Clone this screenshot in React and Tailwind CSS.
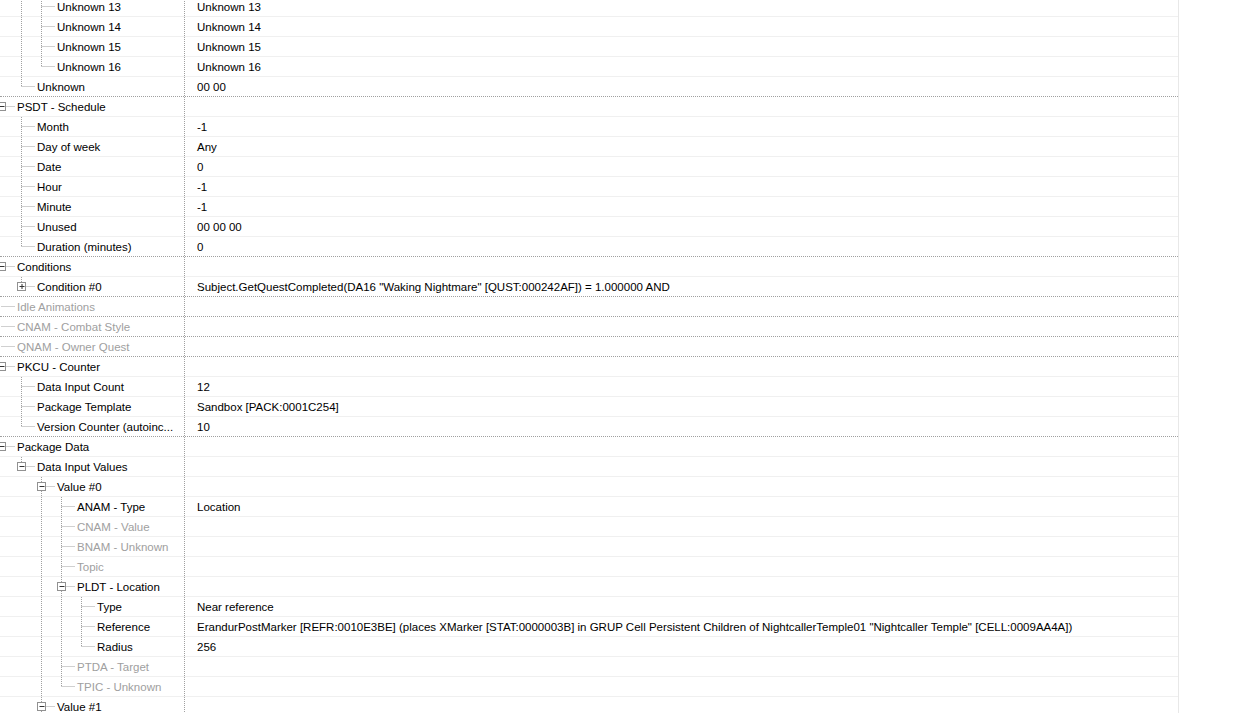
const rows = [
  { name: 'Unknown 13', value: 'Unknown 13', level: 3 },
  { name: 'Unknown 14', value: 'Unknown 14', level: 3 },
  { name: 'Unknown 15', value: 'Unknown 15', level: 3 },
  { name: 'Unknown 16', value: 'Unknown 16', level: 3, last: true },
  { name: 'Unknown', value: '00 00', level: 2, last: true, sep: true },
  { name: 'PSDT - Schedule', level: 1, box: '-' },
  { name: 'Month', value: '-1', level: 2 },
  { name: 'Day of week', value: 'Any', level: 2 },
  { name: 'Date', value: '0', level: 2 },
  { name: 'Hour', value: '-1', level: 2 },
  { name: 'Minute', value: '-1', level: 2 },
  { name: 'Unused', value: '00 00 00', level: 2 },
  { name: 'Duration (minutes)', value: '0', level: 2, last: true, sep: true },
  { name: 'Conditions', level: 1, box: '-' },
  {
    name: 'Condition #0',
    value: 'Subject.GetQuestCompleted(DA16 "Waking Nightmare" [QUST:000242AF]) = 1.000000 AND',
    level: 2,
    box: '+',
    last: true,
    sep: true,
  },
  { name: 'Idle Animations', level: 1, grey: true, sep: true },
  { name: 'CNAM - Combat Style', level: 1, grey: true, sep: true },
  { name: 'QNAM - Owner Quest', level: 1, grey: true, sep: true },
  { name: 'PKCU - Counter', level: 1, box: '-' },
  { name: 'Data Input Count', value: '12', level: 2 },
  { name: 'Package Template', value: 'Sandbox [PACK:0001C254]', level: 2 },
  { name: 'Version Counter (autoinc...', value: '10', level: 2, last: true, sep: true },
  { name: 'Package Data', level: 1, box: '-' },
  { name: 'Data Input Values', level: 2, box: '-', last: true },
  { name: 'Value #0', level: 3, box: '-' },
  { name: 'ANAM - Type', value: 'Location', level: 4 },
  { name: 'CNAM - Value', level: 4, grey: true },
  { name: 'BNAM - Unknown', level: 4, grey: true },
  { name: 'Topic', level: 4, grey: true },
  { name: 'PLDT - Location', level: 4, box: '-' },
  { name: 'Type', value: 'Near reference', level: 5 },
  {
    name: 'Reference',
    value:
      'ErandurPostMarker [REFR:0010E3BE] (places XMarker [STAT:0000003B] in GRUP Cell Persistent Children of NightcallerTemple01 "Nightcaller Temple" [CELL:0009AA4A])',
    level: 5,
  },
  { name: 'Radius', value: '256', level: 5, last: true },
  { name: 'PTDA - Target', level: 4, grey: true },
  { name: 'TPIC - Unknown', level: 4, grey: true, last: true },
  { name: 'Value #1', level: 3, box: '-' },
];

// ancestors above the first visible row are still open (not last)
function withGuides(list) {
  const open = { 1: true, 2: true };
  return list.map((r) => {
    const guides = [];
    for (let a = 2; a < r.level; a++) if (open[a]) guides.push(a);
    open[r.level] = !r.last;
    return { ...r, guides };
  });
}

const dot = { stroke: '#a0a0a0', strokeWidth: 1, strokeDasharray: '1 1' };

function TreeLines({ row }) {
  const L = row.level;
  const cx = 20 * L - 19 + 0.5;
  return (
    <svg className="absolute left-0 top-0" width="184" height="20">
      {row.guides.map((a) => (
        <line key={a} x1={20 * a - 18.5} y1={0} x2={20 * a - 18.5} y2={20} {...dot} />
      ))}
      {L > 1 && <line x1={cx} y1={0} x2={cx} y2={row.last ? 10 : 20} {...dot} />}
      <line x1={cx} y1={9.5} x2={20 * L - 5} y2={9.5} {...dot} />
      {row.box && (
        <g>
          <rect x={cx - 4} y={5.5} width={8} height={8} fill="#fff" stroke="#919191" />
          <line x1={cx - 2} y1={9.5} x2={cx + 3} y2={9.5} stroke="#333" />
          {row.box === '+' && <line x1={cx + 0.5} y1={7} x2={cx + 0.5} y2={12} stroke="#333" />}
        </g>
      )}
    </svg>
  );
}

function Row({ row }) {
  return (
    <div
      className={`flex h-[20px] border-b ${
        row.sep ? 'border-dotted border-[#a0a0a0]' : 'border-solid border-[#f0f0f0]'
      }`}
    >
      <div className="relative w-[185px] shrink-0 overflow-hidden border-r border-dotted border-[#a0a0a0]">
        <TreeLines row={row} />
        <div
          className={`absolute top-[1px] h-[19px] leading-[19px] whitespace-nowrap ${
            row.grey ? 'text-[#a0a0a0]' : 'text-black'
          }`}
          style={{ left: 20 * row.level - 3 }}
        >
          {row.name}
        </div>
      </div>
      <div className="flex-1 overflow-hidden whitespace-nowrap pl-[12px] pt-[1px] leading-[19px] text-black">
        {row.value}
      </div>
    </div>
  );
}

export default function App() {
  const list = withGuides(rows);
  return (
    <div
      className="h-[713px] w-[1250px] overflow-hidden bg-white text-[11.5px]"
      style={{ fontFamily: '"Liberation Sans", Arial, sans-serif' }}
    >
      <div className="-mt-[3px] w-[1179px] border-r border-[#e8e8e8]">
        {list.map((r, i) => (
          <Row key={i} row={r} />
        ))}
      </div>
    </div>
  );
}
